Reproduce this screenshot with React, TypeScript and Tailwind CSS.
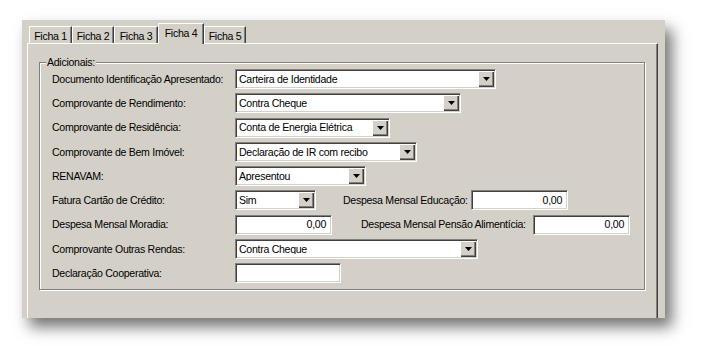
import React from "react";

const font = { fontFamily: '"Liberation Sans", Arial, sans-serif' };
const txt = "text-[10.6px] tracking-[-0.3px] text-black leading-none whitespace-nowrap";

function Arrow() {
  return (
    <svg width="7" height="4" viewBox="0 0 7 4">
      <polygon points="0,0 7,0 3.5,4" fill="#000" />
    </svg>
  );
}

function Select({ value, w }: { value: string; w: string }) {
  return (
    <div
      className={`${w} h-[20px] flex items-center bg-white border border-t-[#808080] border-l-[#808080] border-b-white border-r-white shadow-[inset_1px_1px_0_#404040,inset_-1px_-1px_0_#d4d0c8] p-[1px]`}
    >
      <div className={`flex-1 pl-[2px] overflow-hidden ${txt}`}>{value}</div>
      <div className="w-[16px] h-[16px] flex items-center justify-center bg-[#d4d0c8] shadow-[inset_1px_1px_0_#fff,inset_-1px_-1px_0_#404040,inset_-2px_-2px_0_#808080]">
        <Arrow />
      </div>
    </div>
  );
}

function Input({ value, w }: { value?: string; w: string }) {
  return (
    <div
      className={`${w} h-[20px] flex items-center justify-end bg-white border border-t-[#808080] border-l-[#808080] border-b-white border-r-white shadow-[inset_1px_1px_0_#404040,inset_-1px_-1px_0_#d4d0c8] pr-[5px] ${txt}`}
    >
      {value}
    </div>
  );
}

function Row({ label, children }: { label: string; children: React.ReactNode }) {
  return (
    <div className="flex items-center h-[24.25px]">
      <div className={`w-[183px] ${txt}`}>{label}</div>
      {children}
    </div>
  );
}

function Tab({ label, w, selected }: { label: string; w: string; selected?: boolean }) {
  if (selected) {
    return (
      <div
        className={`${w} h-[21px] -mb-[1px] relative z-10 flex items-start justify-center pt-[4px] bg-[#d4d0c8] ${txt} border-t border-l border-t-white border-l-white border-r border-r-[#404040] shadow-[inset_-1px_0_0_#808080]`}
      >
        {label}
      </div>
    );
  }
  return (
    <div
      className={`${w} h-[17px] flex items-start justify-center pt-[4px] bg-[#d4d0c8] ${txt} border-t border-l border-t-white border-l-white border-r border-r-[#404040] shadow-[inset_-1px_0_0_#808080]`}
    >
      {label}
    </div>
  );
}

export default function App() {
  return (
    <div className="w-[707px] h-[361px] bg-white pt-[20px] pl-[22px]" style={font}>
      <div className="w-[643px] h-[298px] bg-[#d4d0c8] overflow-hidden shadow-[7px_9px_14px_rgba(0,0,0,0.55)] pl-[5px] pr-[7px] pt-[3px]">
        <div className="flex items-end h-[20px] pl-[2px]">
          <Tab label="Ficha 1" w="w-[43px]" />
          <Tab label="Ficha 2" w="w-[42px]" />
          <Tab label="Ficha 3" w="w-[44px]" />
          <Tab label="Ficha 4" w="w-[46px]" selected />
          <Tab label="Ficha 5" w="w-[42px]" />
        </div>
        <div className="h-[320px] border-t border-l border-t-white border-l-white border-r border-r-[#404040] shadow-[inset_-1px_0_0_#808080] pt-[18px] pl-[11px] pr-[12px]">
          <div className="relative h-[228px] border border-[#808080] shadow-[1px_1px_0_#fff,inset_1px_1px_0_#fff] pt-[4px] pl-[12px]">
            <span className={`absolute left-[6px] -top-[6px] px-[1px] bg-[#d4d0c8] ${txt}`}>
              Adicionais:
            </span>
            <Row label="Documento Identificação Apresentado:">
              <Select value="Carteira de Identidade" w="w-[261px]" />
            </Row>
            <Row label="Comprovante de Rendimento:">
              <Select value="Contra Cheque" w="w-[226px]" />
            </Row>
            <Row label="Comprovante de Residência:">
              <Select value="Conta de Energia Elétrica" w="w-[155px]" />
            </Row>
            <Row label="Comprovante de Bem Imóvel:">
              <Select value="Declaração de IR com recibo" w="w-[182px]" />
            </Row>
            <Row label="RENAVAM:">
              <Select value="Apresentou" w="w-[131px]" />
            </Row>
            <Row label="Fatura Cartão de Crédito:">
              <Select value="Sim" w="w-[81px]" />
              <div className={`ml-[27px] w-[128px] ${txt}`}>Despesa Mensal Educação:</div>
              <Input value="0,00" w="w-[97px]" />
            </Row>
            <Row label="Despesa Mensal Moradia:">
              <Input value="0,00" w="w-[97px]" />
              <div className={`ml-[29px] w-[172px] ${txt}`}>Despesa Mensal Pensão Alimentícia:</div>
              <Input value="0,00" w="w-[97px]" />
            </Row>
            <Row label="Comprovante Outras Rendas:">
              <Select value="Contra Cheque" w="w-[243px]" />
            </Row>
            <Row label="Declaração Cooperativa:">
              <Input w="w-[106px]" />
            </Row>
          </div>
        </div>
      </div>
    </div>
  );
}
